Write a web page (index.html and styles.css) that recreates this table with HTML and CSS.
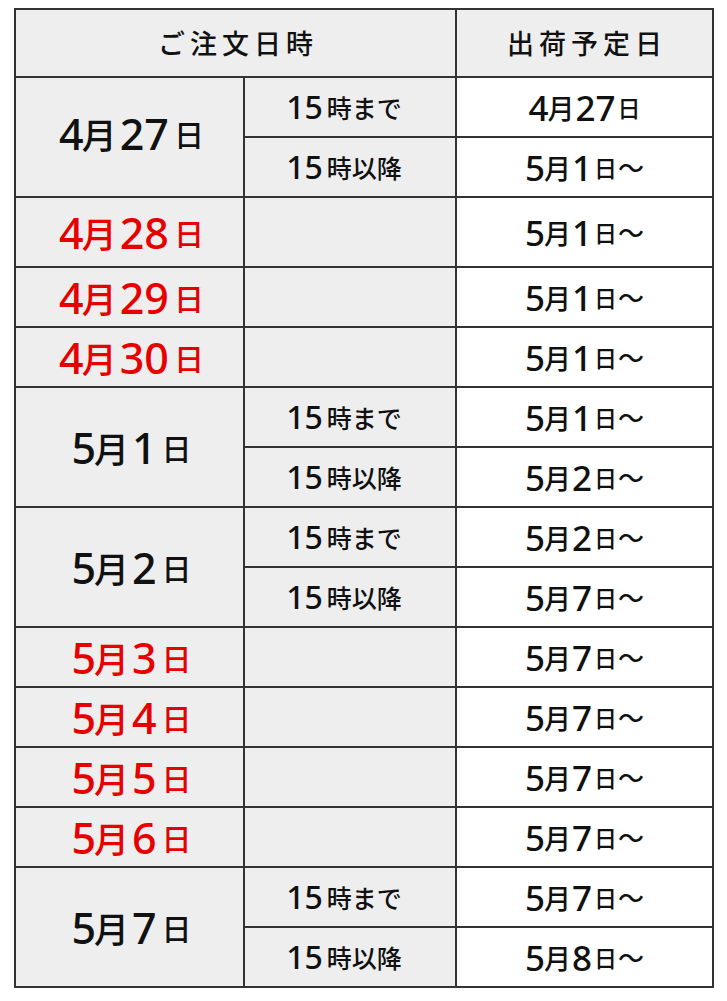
FILE: index.html
```html
<!DOCTYPE html>
<html lang="ja">
<head>
<meta charset="utf-8">
<title>出荷予定日</title>
<link rel="stylesheet" href="styles.css">
</head>
<body>
<div class="schedule">
  <div class="cell head span2">ご注文日時</div>
  <div class="cell head">出荷予定日</div>

  <div class="cell order tall first"><span class="n">4</span><span class="m">月</span><span class="n">27</span><span class="d">日</span></div>
  <div class="cell time"><span class="n">15</span><span class="k">時まで</span></div>
  <div class="cell ship"><span class="n">4</span><span class="m">月</span><span class="n">27</span><span class="d">日</span></div>
  <div class="cell time"><span class="n">15</span><span class="k">時以降</span></div>
  <div class="cell ship"><span class="n">5</span><span class="m">月</span><span class="n">1</span><span class="d">日</span><span class="t">～</span></div>

  <div class="cell order red"><span class="n">4</span><span class="m">月</span><span class="n">28</span><span class="d">日</span></div>
  <div class="cell time"></div>
  <div class="cell ship"><span class="n">5</span><span class="m">月</span><span class="n">1</span><span class="d">日</span><span class="t">～</span></div>

  <div class="cell order red"><span class="n">4</span><span class="m">月</span><span class="n">29</span><span class="d">日</span></div>
  <div class="cell time"></div>
  <div class="cell ship"><span class="n">5</span><span class="m">月</span><span class="n">1</span><span class="d">日</span><span class="t">～</span></div>

  <div class="cell order red"><span class="n">4</span><span class="m">月</span><span class="n">30</span><span class="d">日</span></div>
  <div class="cell time"></div>
  <div class="cell ship"><span class="n">5</span><span class="m">月</span><span class="n">1</span><span class="d">日</span><span class="t">～</span></div>

  <div class="cell order tall"><span class="n">5</span><span class="m">月</span><span class="n">1</span><span class="d">日</span></div>
  <div class="cell time"><span class="n">15</span><span class="k">時まで</span></div>
  <div class="cell ship"><span class="n">5</span><span class="m">月</span><span class="n">1</span><span class="d">日</span><span class="t">～</span></div>
  <div class="cell time"><span class="n">15</span><span class="k">時以降</span></div>
  <div class="cell ship"><span class="n">5</span><span class="m">月</span><span class="n">2</span><span class="d">日</span><span class="t">～</span></div>

  <div class="cell order tall"><span class="n">5</span><span class="m">月</span><span class="n">2</span><span class="d">日</span></div>
  <div class="cell time"><span class="n">15</span><span class="k">時まで</span></div>
  <div class="cell ship"><span class="n">5</span><span class="m">月</span><span class="n">2</span><span class="d">日</span><span class="t">～</span></div>
  <div class="cell time"><span class="n">15</span><span class="k">時以降</span></div>
  <div class="cell ship"><span class="n">5</span><span class="m">月</span><span class="n">7</span><span class="d">日</span><span class="t">～</span></div>

  <div class="cell order red"><span class="n">5</span><span class="m">月</span><span class="n">3</span><span class="d">日</span></div>
  <div class="cell time"></div>
  <div class="cell ship"><span class="n">5</span><span class="m">月</span><span class="n">7</span><span class="d">日</span><span class="t">～</span></div>

  <div class="cell order red"><span class="n">5</span><span class="m">月</span><span class="n">4</span><span class="d">日</span></div>
  <div class="cell time"></div>
  <div class="cell ship"><span class="n">5</span><span class="m">月</span><span class="n">7</span><span class="d">日</span><span class="t">～</span></div>

  <div class="cell order red"><span class="n">5</span><span class="m">月</span><span class="n">5</span><span class="d">日</span></div>
  <div class="cell time"></div>
  <div class="cell ship"><span class="n">5</span><span class="m">月</span><span class="n">7</span><span class="d">日</span><span class="t">～</span></div>

  <div class="cell order red"><span class="n">5</span><span class="m">月</span><span class="n">6</span><span class="d">日</span></div>
  <div class="cell time"></div>
  <div class="cell ship"><span class="n">5</span><span class="m">月</span><span class="n">7</span><span class="d">日</span><span class="t">～</span></div>

  <div class="cell order tall"><span class="n">5</span><span class="m">月</span><span class="n">7</span><span class="d">日</span></div>
  <div class="cell time"><span class="n">15</span><span class="k">時まで</span></div>
  <div class="cell ship"><span class="n">5</span><span class="m">月</span><span class="n">7</span><span class="d">日</span><span class="t">～</span></div>
  <div class="cell time"><span class="n">15</span><span class="k">時以降</span></div>
  <div class="cell ship"><span class="n">5</span><span class="m">月</span><span class="n">8</span><span class="d">日</span><span class="t">～</span></div>
</div>
</body>
</html>
```

FILE: styles.css
```css
html, body {
  margin: 0;
  padding: 0;
  background: #ffffff;
}

body {
  font-family: "Noto Sans CJK JP", "Noto Sans", sans-serif;
  color: #111111;
}

.schedule {
  margin: 8px 0 0 14px;
  width: 700px;
  box-sizing: border-box;
  display: grid;
  grid-template-columns: 227px 210px 255px;
  grid-template-rows: 66px 58px 58px 68px repeat(12, 58px);
  gap: 2px;
  padding: 2px;
  background: #333333;
}

.cell {
  display: flex;
  align-items: center;
  justify-content: center;
  background: #eeeeee;
  line-height: 1;
  white-space: nowrap;
  font-weight: 500;
}

.n {
  font-family: "Noto Sans", "Noto Sans CJK JP", sans-serif;
}

.span2 {
  grid-column: span 2;
}

.tall {
  grid-row: span 2;
}

.head {
  font-size: 27px;
  letter-spacing: 5px;
  text-indent: 5px;
  padding-bottom: 2px;
}

.ship {
  background: #ffffff;
}

.red {
  color: #e60000;
}

/* order date column */
.order {
  padding-left: 4px;
}
.order.first {
  padding-bottom: 8px;
}
.order .n {
  font-size: 43px;
}
.order .m {
  font-size: 35px;
  margin: 0 3px 0 -2px;
}
.order .d {
  font-size: 30px;
  margin-left: 5px;
}

/* time column */
.time {
  padding-right: 12px;
}
.time .n {
  font-size: 32px;
}
.time .k {
  font-size: 25px;
  margin-left: 4px;
}

/* shipping column */
.ship .n {
  font-size: 35px;
}
.ship .m {
  font-size: 27px;
  margin: 0 1px 0 -1px;
}
.ship .d {
  font-size: 23px;
  margin-left: 2px;
}
.ship .t {
  font-size: 26px;
  margin-left: 1px;
}
```
